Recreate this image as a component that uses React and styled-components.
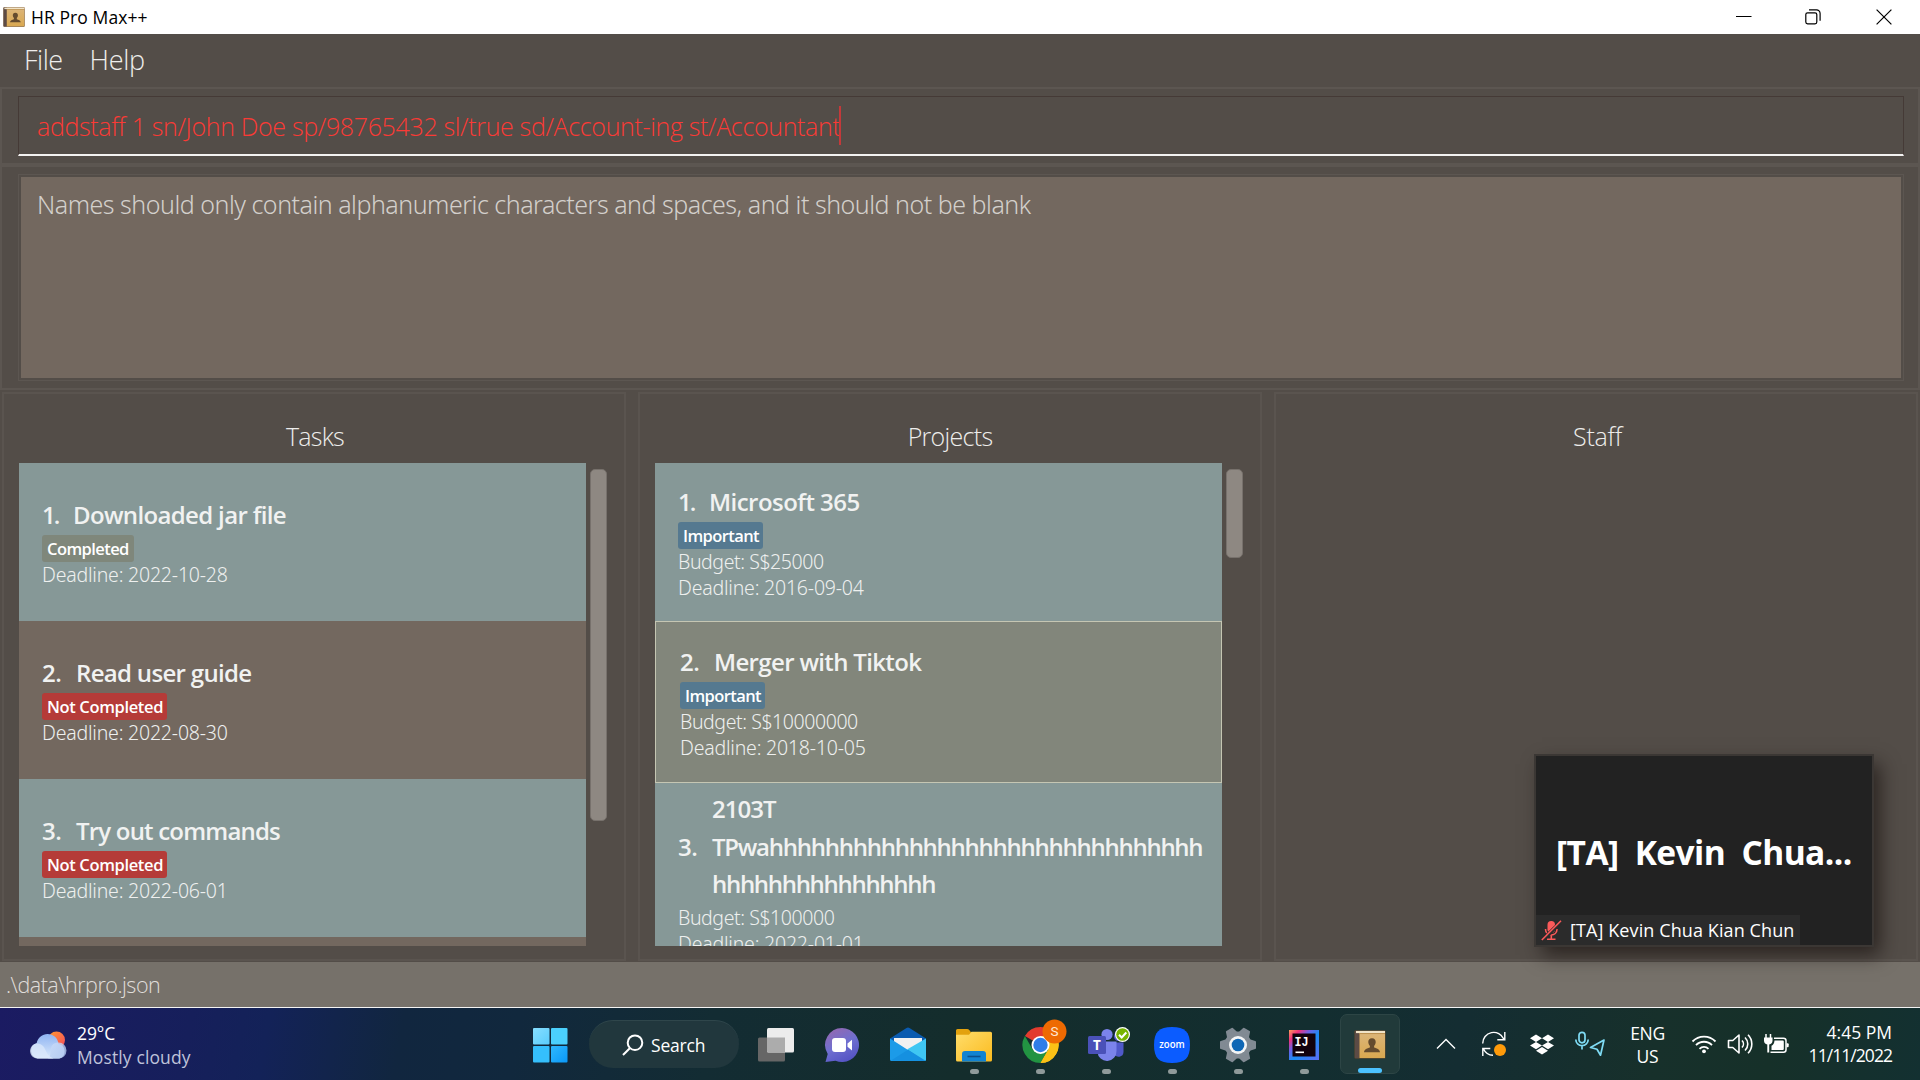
import React from "react";
import styled, { createGlobalStyle } from "styled-components";

const colors = {
  base: "#534d48",
  edge: "#5c5651",
  brown: "#73685f",
  teal: "#869897",
  olive: "#82867b",
  red: "#b53b38",
  blue: "#557990",
  thumb: "#8e8882",
};

const GlobalStyle = createGlobalStyle`
  * { box-sizing: border-box; }
  body {
    margin: 0;
    overflow: hidden;
    font-family: "Open Sans", "Noto Sans", sans-serif;
  }
`;

const Text = styled.span`
  display: block;
  flex: none;
  white-space: pre;
  font-size: ${(p) => p.$size}px;
  font-weight: ${(p) => p.$weight || 400};
  letter-spacing: ${(p) => p.$track || 0}px;
  line-height: ${(p) => p.$line || 24}px;
  color: ${(p) => p.$color || "#fff"};
`;

const BodyText = styled(Text)`
  font-family: "Noto Sans", "Open Sans", sans-serif;
`;

const Screen = styled.div`
  width: 1920px;
  height: 1080px;
  display: flex;
  flex-direction: column;
  background: ${colors.base};
`;

/* ---------- window chrome ---------- */

const TitleBar = styled.header`
  height: 34px;
  flex: none;
  display: flex;
  align-items: center;
  padding-left: 3px;
  background: #fff;
`;

const AppTitle = styled.div`
  flex: 1;
  display: flex;
  align-items: center;
  gap: 6px;
`;

const WindowButton = styled.div`
  width: ${(p) => p.$width || 69}px;
  height: 34px;
  display: flex;
  align-items: center;
  justify-content: center;
`;

const MenuBar = styled.nav`
  height: 53px;
  flex: none;
  display: flex;
  align-items: center;
  gap: 27px;
  padding: 0 0 2px 24px;
`;

const CommandPane = styled.section`
  height: 78px;
  flex: none;
  padding: 7px 14px 0 16px;
  border: 2px solid ${colors.edge};
`;

const CommandField = styled.div`
  height: 60px;
  display: flex;
  align-items: center;
  padding-left: 18px;
  border: 1px solid #453a36;
  border-bottom: 2px solid #f3f2f1;
`;

const Caret = styled.div`
  width: 2px;
  height: 39px;
  margin-left: -1px;
  background: #c4393a;
`;

const ResultPane = styled.section`
  height: 225px;
  flex: none;
  padding: 7px 14px 7px 16px;
  border: 2px solid ${colors.edge};
`;

const ResultFrame = styled.div`
  height: 207px;
  padding: 2px;
  border: 1px solid ${colors.edge};
`;

const ResultBox = styled.div`
  height: 201px;
  padding: 10px 0 0 16px;
  background: ${colors.brown};
`;

/* ---------- list panels ---------- */

const Panels = styled.main`
  height: 572px;
  flex: none;
  display: grid;
  grid-template-columns: 624px 624px 644px;
  column-gap: 12px;
  padding: 2px 2px 1px;
`;

const Panel = styled.section`
  display: flex;
  flex-direction: column;
  border: 2px solid #5a544f;
`;

const PanelTitle = styled.h2`
  height: 69px;
  flex: none;
  margin: 0;
  padding: 15px 0 0 ${(p) => p.$inset || 0}px;
  display: flex;
  align-items: center;
  justify-content: center;
`;

const ListArea = styled.div`
  display: flex;
  gap: 4px;
  padding-left: 15px;
`;

const List = styled.div`
  width: 567px;
  height: 483px;
  overflow: hidden;
  display: flex;
  flex-direction: column;
`;

const ScrollThumb = styled.div`
  width: 17px;
  height: ${(p) => p.$height}px;
  margin-top: 6px;
  border-radius: 5px;
  border: 1px solid #77716c;
  background: ${colors.thumb};
`;

const Card = styled.article`
  flex: none;
  height: ${(p) => p.$height || 158}px;
  padding-left: 23px;
  display: flex;
  flex-direction: column;
  justify-content: ${(p) => (p.$top ? "flex-start" : "center")};
  padding-top: ${(p) => (p.$top ? 7 : 0)}px;
  background: ${(p) => p.$bg};
  border: ${(p) => (p.$selected ? "1px solid #c5c6b3" : "0")};
  ${(p) => p.$selected && "padding-left: 24px;"}
`;

const Heading = styled.div`
  display: flex;
  align-items: center;
`;

const Index = styled.div`
  width: ${(p) => p.$width}px;
  flex: none;
`;

const Name = styled.div`
  display: flex;
  flex-direction: column;
`;

const Tags = styled.div`
  display: flex;
  padding-top: 2px;
`;

const Tag = styled.span`
  height: 27px;
  width: ${(p) => p.$width}px;
  padding-left: 5px;
  display: flex;
  align-items: center;
  border-radius: 3px;
  background: ${(p) => p.$bg};
`;

const StatusBar = styled.footer`
  height: 46px;
  flex: none;
  display: flex;
  align-items: center;
  padding-left: 6px;
  background: #76716a;
  border-bottom: 1px solid #f4f4f4;
`;

/* ---------- meeting thumbnail ---------- */

const Meeting = styled.aside`
  position: absolute;
  left: 1536px;
  top: 756px;
  width: 336px;
  height: 189px;
  display: flex;
  flex-direction: column;
  background: #222;
  box-shadow: 0 0 0 2px #3b3734, 7px 9px 18px 1px rgba(25, 18, 15, 0.7);
`;

const MeetingName = styled.div`
  height: 159px;
  padding: 32px 0 0 20px;
  display: flex;
  align-items: center;
  word-spacing: 8px;
`;

const MeetingTag = styled.div`
  width: 264px;
  height: 30px;
  padding-left: 5px;
  display: flex;
  align-items: center;
  gap: 8px;
  background: #2b2b2b;
`;

/* ---------- taskbar ---------- */

const Taskbar = styled.div`
  height: 72px;
  flex: none;
  display: flex;
  align-items: center;
  background: linear-gradient(100deg, #1b1b62 0%, #161f5b 10%, #132258 14%, #11263f 21%, #11283d 27%, #132c33 37%, #142d2c 50%, #132e30 68%, #142d32 76%, #17302b 86%, #163029 92%, #133031 100%);
`;

const Weather = styled.div`
  width: 517px;
  flex: none;
  padding: 2px 0 0 29px;
  display: flex;
  align-items: center;
  gap: 10px;
`;

const Lines = styled.div`
  display: flex;
  flex-direction: column;
  align-items: ${(p) => p.$align || "flex-start"};
`;

const AppButton = styled.div`
  width: 66px;
  height: 72px;
  flex: none;
  display: flex;
  flex-direction: column;
  align-items: center;
  padding-top: 19px;
`;

const AppIcon = styled.div`
  height: 42px;
  display: flex;
  align-items: flex-start;
`;

const Indicator = styled.div`
  width: ${(p) => (p.$active ? 24 : 9)}px;
  height: 5px;
  border-radius: 3px;
  background: ${(p) => (p.$active ? "#4cc2ff" : "#8f9a9a")};
`;

const ActiveTile = styled.div`
  width: 60px;
  height: 60px;
  margin: 0 22px 0 3px;
  flex: none;
  padding-top: 15px;
  display: flex;
  flex-direction: column;
  align-items: center;
  justify-content: space-between;
  border: 1px solid #2d4545;
  border-radius: 7px;
  background: #213a3a;
`;

const SearchPill = styled.div`
  width: 150px;
  height: 48px;
  flex: none;
  margin: 0 4px 0 6px;
  padding-left: 33px;
  display: flex;
  align-items: center;
  gap: 7px;
  border-radius: 24px;
  border-top: 1px solid #2f464b;
  background: #21373d;
`;

const TrayItem = styled.div`
  width: ${(p) => p.$width}px;
  flex: none;
  display: flex;
  align-items: center;
  justify-content: center;
`;

const Language = styled(TrayItem)`
  margin-right: 5px;
  padding-top: 1px;
`;

const Clock = styled.div`
  width: 98px;
  flex: none;
  display: flex;
  justify-content: flex-end;
`;

/* ---------- icons ---------- */

const AddressBook = ({ w, h }) => (
  <svg width={w} height={h} viewBox="0 0 32 30" preserveAspectRatio="none">
    <defs>
      <linearGradient id="cover" x1="0" y1="0" x2="0" y2="1">
        <stop offset="0" stopColor="#dcb67c" />
        <stop offset="1" stopColor="#d9a850" />
      </linearGradient>
    </defs>
    <rect x="0.5" y="0.5" width="31" height="29" rx="1" fill="#6b4a2a" />
    <rect x="1" y="1" width="4.5" height="28" fill="#5c4b45" />
    <rect x="5.5" y="1" width="25.5" height="28" fill="url(#cover)" />
    <rect x="2" y="1" width="29" height="2.2" fill="#f1e3c6" />
    <rect x="5.5" y="3.2" width="25.5" height="1" fill="#b98d4c" />
    <path d="M18 8.5c2.6 0 3.9 1.8 3.7 4.2-.2 2-.9 3-1.6 3.8v1.7c2.6.9 5.400 1.600 5.900 4.800H10c.5-3.200 3.300-3.900 5.900-4.800v-1.700c-.7-.8-1.400-1.800-1.600-3.800-.2-2.400 1.100-4.200 3.700-4.200z" fill="#644b2e" />
  </svg>
);

const CloudIcon = () => (
  <svg width="38" height="30" viewBox="0 0 38 30">
    <defs>
      <linearGradient id="sun" x1="0" y1="0" x2="1" y2="1">
        <stop offset="0" stopColor="#ff9a2e" />
        <stop offset="1" stopColor="#f4495e" />
      </linearGradient>
      <linearGradient id="cloud" x1="0" y1="0" x2="0" y2="1">
        <stop offset="0" stopColor="#8fb4f2" />
        <stop offset="1" stopColor="#dbe9fb" />
      </linearGradient>
      <linearGradient id="cloudFront" x1="0" y1="0" x2="1" y2="1">
        <stop offset="0" stopColor="#cfdff9" />
        <stop offset="1" stopColor="#a9c2ee" />
      </linearGradient>
    </defs>
    <circle cx="27.500" cy="10" r="8.500" fill="url(#sun)" />
    <path d="M8.500 28.500a8 8 0 0 1-.8-15.500C9 7.500 13.300 4 18.500 4c6 0 10.500 4.300 11 10a7.500 7.500 0 0 1 1 14.500z" fill="url(#cloud)" />
    <path d="M29.500 12.500a8 8 0 0 1 0 16H19c4-2 1-8 4-13 1.600-2.200 4-3 6.500-3z" fill="url(#cloudFront)" opacity=".8" />
    <path d="M8.500 28.500a7.500 7.500 0 1 1 6-12c3 4 3 9 10 12z" fill="#dce8fb" opacity=".75" />
  </svg>
);

const WindowsLogo = () => (
  <svg width="36" height="36" viewBox="0 0 36 36">
    <defs>
      <linearGradient id="win" x1="0" y1="0" x2="1" y2="1">
        <stop offset="0" stopColor="#86deff" />
        <stop offset="1" stopColor="#5accfb" />
      </linearGradient>
      <linearGradient id="win2" x1="0" y1="0" x2="1" y2="1">
        <stop offset="0" stopColor="#2fb8fd" />
        <stop offset="1" stopColor="#0a98f8" />
      </linearGradient>
    </defs>
    <rect x="1" y="1" width="16.500" height="16.500" rx="1" fill="url(#win)" />
    <rect x="19" y="1" width="16.500" height="16.500" rx="1" fill="#4bd0fd" />
    <rect x="1" y="19" width="16.500" height="16.500" rx="1" fill="#35bffc" />
    <rect x="19" y="19" width="16.500" height="16.500" rx="1" fill="url(#win2)" />
  </svg>
);

const SearchIcon = () => (
  <svg width="22" height="22" viewBox="0 0 22 22" fill="none" stroke="#fff" strokeWidth="2">
    <circle cx="13" cy="8.700" r="7.300" />
    <path d="M7.800 14.200 1 21" />
  </svg>
);

const TaskViewIcon = () => (
  <svg width="36" height="36" viewBox="0 0 36 36">
    <rect x="0" y="10.500" width="27" height="24" rx="1.500" fill="#666" />
    <rect x="9" y="1" width="27" height="24.500" rx="1.500" fill="#ececec" />
    <path d="M9 10.500h18v15H10.500A1.500 1.500 0 0 1 9 24z" fill="#acacac" />
  </svg>
);

const ChatIcon = () => (
  <svg width="36" height="36" viewBox="0 0 36 36">
    <defs>
      <linearGradient id="chat" x1="0.200" y1="0" x2="0.700" y2="1">
        <stop offset="0" stopColor="#9468b0" />
        <stop offset="0.500" stopColor="#6f6fd0" />
        <stop offset="1" stopColor="#5352c4" />
      </linearGradient>
    </defs>
    <path d="M18 1a17 17 0 1 1-6.500 32.700L1.500 35l2.200-8A17 17 0 0 1 18 1z" fill="url(#chat)" />
    <rect x="8" y="11" width="14" height="14" rx="3" fill="#fff" />
    <path d="M23.500 16.500 28 12.800v10.600l-4.500-3.700z" fill="#fff" />
  </svg>
);

const MailIcon = () => (
  <svg width="36" height="36" viewBox="0 0 36 36">
    <path d="M0 11.500 16.500.9q1.500-.8 3 0L36 11.500V20H0z" fill="#0a5bb0" />
    <path d="M4 11h28v12H4z" fill="#f1f1f1" />
    <path d="M0 11.500 18 23l18 11H1.500A1.500 1.500 0 0 1 0 32.500z" fill="#1c9be8" />
    <path d="M36 11.500 17 22.600 34.500 34a1.500 1.500 0 0 0 1.500-1.500z" fill="#3fc7f3" />
    <path d="M1 33.500 18 22.800 36 34z" fill="#1590e0" />
  </svg>
);

const ExplorerIcon = () => (
  <svg width="36" height="36" viewBox="0 0 36 36">
    <defs>
      <linearGradient id="folder" x1="0" y1="0" x2="1" y2="1">
        <stop offset="0" stopColor="#ffdd6b" />
        <stop offset="1" stopColor="#fbbb1f" />
      </linearGradient>
    </defs>
    <path d="M0 3.500A1.500 1.500 0 0 1 1.500 2H11q1.500 0 2.500 1.200L15.500 6H27v7H0z" fill="#e3a20e" />
    <path d="M0 7.800h13l2.500-3h19A1.500 1.500 0 0 1 36 6.300V33a1.500 1.500 0 0 1-1.500 1.500h-33A1.500 1.500 0 0 1 0 33z" fill="url(#folder)" />
    <path d="M6 34.500V27a3 3 0 0 1 3-3h18a3 3 0 0 1 3 3v7.500z" fill="#1183d2" />
    <path d="M11.500 29.500h13" stroke="#0b4f8c" strokeWidth="1.600" />
  </svg>
);

const ChromeSvg = styled.svg`
  margin: -8px 0 0 9px;
`;

const ChromeIcon = () => (
  <ChromeSvg width="46" height="44" viewBox="0 0 46 44">
    <path d="M18.500 26 2.900 17A18 18 0 0 1 34.100 17H18.500z" fill="#e33b2e" />
    <path d="M18.500 26 34.100 17A18 18 0 0 1 18.500 44L26.300 30.500z" fill="#fbc116" />
    <path d="M18.500 26 10.700 30.500 2.900 17A18 18 0 0 0 18.500 44l7.800-13.500z" fill="#229342" />
    <path d="M18.500 17h15.600A18 18 0 0 1 18.500 44l7.800-13.500z" fill="#fbc116" />
    <circle cx="18.500" cy="26" r="9" fill="#fff" />
    <circle cx="18.500" cy="26" r="7.200" fill="#2f7de9" />
    <circle cx="32.500" cy="12.500" r="12" fill="#ee6a02" />
    <text x="32.500" y="17.300" fontSize="13.500" textAnchor="middle" fill="#ffe9d6" fontFamily="Roboto, sans-serif">S</text>
  </ChromeSvg>
);

const TeamsIcon = () => (
  <svg width="44" height="36" viewBox="0 0 44 36">
    <circle cx="30.500" cy="9.500" r="4.500" fill="#5059c9" />
    <path d="M26 15.500h9.500v9.500a5 5 0 0 1-9.500 2z" fill="#5059c9" />
    <circle cx="19" cy="7.500" r="5.600" fill="#7b83eb" />
    <path d="M9.500 14.500h19V24a9.500 9.500 0 0 1-19 1z" fill="#7b83eb" />
    <rect x="0" y="9" width="18" height="18" rx="1.500" fill="#4a51b8" />
    <text x="9" y="22.800" fontSize="13.500" fontWeight="700" textAnchor="middle" fill="#fff" fontFamily="Open Sans, sans-serif">T</text>
    <circle cx="34.500" cy="7.500" r="7.500" fill="#fff" />
    <circle cx="34.500" cy="7.500" r="6.300" fill="#77b300" />
    <path d="m31 7.800 2.700 2.700 4.600-5" fill="none" stroke="#fff" strokeWidth="2" />
  </svg>
);

const TeamsInset = styled.div`
  padding-left: 7px;
`;

const ZoomIcon = () => (
  <svg width="36" height="36" viewBox="0 0 36 36">
    <path d="M18 0C31 0 36 5 36 18S31 36 18 36 0 31 0 18 5 0 18 0z" fill="#0b5cff" />
    <text x="18" y="21.300" fontSize="11.500" fontWeight="600" textLength="25.500" lengthAdjust="spacingAndGlyphs" textAnchor="middle" fill="#fff" fontFamily="Open Sans, sans-serif">zoom</text>
  </svg>
);

const GearIcon = () => (
  <svg width="36" height="36" viewBox="0 0 36 36">
    <g fill="#818a93">
      {[0, 60, 120].map((a) => (
        <path key={a} d="M0 15q0-.8.800-1L7 12V24L.8 22Q0 21.800 0 21zM36 15q0-.8-.8-1L29 12V24l6.200-2q.8-.2.800-1z" transform={`rotate(${a} 18 18)`} />
      ))}
      <circle cx="18" cy="18" r="13.500" />
    </g>
    <circle cx="18" cy="18" r="9" fill="#f3f5f6" />
    <circle cx="18" cy="18" r="6.300" fill="#0f67b5" />
  </svg>
);

const IntelliJIcon = () => (
  <svg width="30" height="30" viewBox="0 0 30 30">
    <defs>
      <linearGradient id="ij" x1="0" y1="0" x2="1" y2="1">
        <stop offset="0" stopColor="#fca05a" />
        <stop offset="0.180" stopColor="#f2307b" />
        <stop offset="0.360" stopColor="#6a62e8" />
        <stop offset="0.550" stopColor="#1b8cf4" />
        <stop offset="1" stopColor="#5c6cf5" />
      </linearGradient>
    </defs>
    <rect width="30" height="30" fill="url(#ij)" />
    <rect x="3.500" y="3.500" width="23" height="23" fill="#12020d" />
    <text x="5.500" y="15.800" fontSize="12.500" fontWeight="700" fill="#fff" fontFamily="Liberation Mono, monospace" textLength="14" lengthAdjust="spacingAndGlyphs">IJ</text>
    <rect x="6.500" y="21.500" width="8.500" height="1.600" fill="#fff" />
  </svg>
);

const ChevronUp = () => (
  <svg width="20" height="12" viewBox="0 0 20 12" fill="none" stroke="#fff" strokeWidth="1.400">
    <path d="m1 10.500 9-9 9 9" />
  </svg>
);

const SyncIcon = () => (
  <svg width="26" height="26" viewBox="0 0 26 26" fill="none" stroke="#fff" strokeWidth="1.400">
    <path d="M1.700 12.500A11 11 0 0 1 22.800 8M23.800 1v7.800h-7.500M12 24.300A11 11 0 0 1 2.500 18M1.800 25v-7.500h7.500" />
    <circle cx="19" cy="19" r="6" fill="#ff9b0a" stroke="none" />
  </svg>
);

const DropboxIcon = () => (
  <svg width="24" height="21" viewBox="0 0 24 21" fill="#fff">
    <path d="m6 .5 6 3.700-6 3.700L0 4.200zM18 .5l6 3.700-6 3.700-6-3.700zM6 7.900l6 3.700-6 3.700-6-3.700zM18 7.900l6 3.700-6 3.700-6-3.700zM12 13l6 3.700-6 3.700-6-3.700z" />
  </svg>
);

const MicLocationIcon = () => (
  <svg width="32" height="26" viewBox="0 0 32 26" fill="none" stroke="#7fdcf5" strokeWidth="1.700">
    <rect x="5" y="1.300" width="6" height="10.500" rx="3" />
    <path d="M1.800 8.500a6.200 6.200 0 0 0 12.400 0M8 14.800V18.500" />
    <path d="m30 9-13.500 7.500 6.500 1.700 3.500 6z" strokeLinejoin="round" />
  </svg>
);

const WifiIcon = () => (
  <svg width="26" height="20" viewBox="0 0 26 20" fill="none" stroke="#fff" strokeWidth="1.800">
    <path d="M1.500 7.500a16 16 0 0 1 23 0M5 11.200a11 11 0 0 1 16 0M8.500 14.800a6.300 6.300 0 0 1 9 0" />
    <circle cx="13" cy="17.300" r="1.900" fill="#fff" stroke="none" />
  </svg>
);

const SpeakerIcon = () => (
  <svg width="26" height="22" viewBox="0 0 26 22" fill="none" stroke="#fff" strokeWidth="1.600">
    <path d="M1.500 7.500h4.300L12 2v18l-6.200-5.500H1.500z" strokeLinejoin="round" />
    <path d="M15 7.500a5 5 0 0 1 0 7M18 4.500a9 9 0 0 1 0 13M21 1.800a13 13 0 0 1 0 18.400" />
  </svg>
);

const BatteryIcon = () => (
  <svg width="26" height="22" viewBox="0 0 26 22">
    <path d="M3 1v4M7.500 1v4" stroke="#fff" strokeWidth="1.500" />
    <path d="M1 4.500h8.500v3.300a4 4 0 0 1-3.300 3.700V19.500h-1.900v-8A4 4 0 0 1 1 7.800z" fill="#fff" />
    <path d="M11 5.300h9.500a2.500 2.500 0 0 1 2.500 2.500v9a2.500 2.500 0 0 1-2.500 2.500H7.500" fill="none" stroke="#fff" strokeWidth="1.500" />
    <path d="M11.500 7.500h8.300q1 0 1 1v7.600q0 1-1 1H8.500v-4.300q2.800-1.300 3-5.300z" fill="#fff" />
    <path d="M23.500 10.300h1.200q1 0 1 1v2q0 1-1 1h-1.200z" fill="#fff" />
  </svg>
);

const MutedMic = () => (
  <svg width="21" height="21" viewBox="0 0 21 21">
    <rect x="6.500" y="1" width="7.500" height="12" rx="3.700" fill="#fb5a5a" />
    <path d="M4.500 9c0 8 11.500 8 11.500 0M10.300 15v4M6 19.300h8.500" stroke="#fb5a5a" strokeWidth="1.600" fill="none" />
    <path d="M1 20.500 20.500 1.500" stroke="#2b2b2b" strokeWidth="4" />
    <path d="M.8 20 20 .8" stroke="#fb5a5a" strokeWidth="1.600" />
  </svg>
);

const Minimise = () => (
  <svg width="16" height="16"><path d="M0 7.500h15.500" stroke="#000" strokeWidth="1" /></svg>
);
const Restore = () => (
  <svg width="16" height="16" viewBox="0 0 16 16" fill="none" stroke="#000" strokeWidth="1.200">
    <rect x="0.800" y="3.800" width="11" height="11" rx="1.800" />
    <path d="M4 .8h7.500a3.600 3.600 0 0 1 3.600 3.600v7.300" />
  </svg>
);
const Close = () => (
  <svg width="16" height="16" stroke="#000" strokeWidth="1.200"><path d="m.6.600 14.800 14.800M15.400.6.600 15.400" /></svg>
);

/* ---------- data ---------- */

const tagLook = {
  Completed: { bg: "#7f877b", width: 92, track: -0.57 },
  "Not Completed": { bg: colors.red, width: 125, track: -0.36 },
  Important: { bg: colors.blue, width: 85, track: -0.6 },
};

const tasks = [
  { n: "1.", gap: 31, numTrack: -2, name: ["Downloaded jar file"], track: [-0.65], tag: "Completed", lines: ["Deadline: 2022-10-28"], bg: colors.teal },
  { n: "2.", gap: 34, numTrack: -0.4, name: ["Read user guide"], track: [-0.68], tag: "Not Completed", lines: ["Deadline: 2022-08-30"], bg: colors.brown },
  { n: "3.", gap: 34, numTrack: -0.4, name: ["Try out commands"], track: [-0.8], tag: "Not Completed", lines: ["Deadline: 2022-06-01"], bg: colors.teal },
];

const projects = [
  { n: "1.", gap: 31, numTrack: -2, name: ["Microsoft 365"], track: [-0.54], tag: "Important", lines: ["Budget: S$25000", "Deadline: 2016-09-04"], bg: colors.teal },
  { n: "2.", gap: 34, numTrack: -0.4, name: ["Merger with Tiktok"], track: [-0.66], tag: "Important", lines: ["Budget: S$10000000", "Deadline: 2018-10-05"], bg: colors.olive, selected: true, height: 162 },
  { n: "3.", gap: 34, numTrack: -0.4, name: ["2103T", "TPwahhhhhhhhhhhhhhhhhhhhhhhhhhhhhhh", "hhhhhhhhhhhhhhhh"], track: [-1, -1.26, -1.3], lines: ["Budget: S$100000", "Deadline: 2022-01-01"], bg: colors.teal, top: true, height: 180 },
];

const soft = "#f1f2f1";

const Entry = ({ item }) => (
  <Card $bg={item.bg} $selected={item.selected} $height={item.height} $top={item.top}>
    <Heading>
      <Index $width={item.gap}>
        <Text $size={24} $weight={600} $line={37.5} $track={item.numTrack} $color={soft}>{item.n}</Text>
      </Index>
      <Name>
        {item.name.map((line, i) => (
          <Text key={line} $size={24} $weight={600} $line={37.5} $track={item.track[i]} $color={soft}>{line}</Text>
        ))}
      </Name>
    </Heading>
    <Tags>
      {item.tag && (
        <Tag $bg={tagLook[item.tag].bg} $width={tagLook[item.tag].width}>
          <Text $size={16.5} $weight={600} $track={tagLook[item.tag].track}>{item.tag}</Text>
        </Tag>
      )}
    </Tags>
    {item.lines.map((line) => (
      <BodyText key={line} $size={19.5} $weight={300} $line={26} $track={line[0] === "B" ? -0.42 : -0.2} $color="#eef0ef">{line}</BodyText>
    ))}
  </Card>
);

const ListPanel = ({ title, track, inset, items, thumb, children }) => (
  <Panel>
    <PanelTitle $inset={inset}>
      <Text $size={25} $weight={300} $line={34} $track={track} $color="#eeedec">{title}</Text>
    </PanelTitle>
    {items && (
      <ListArea>
        <List>
          {items.map((item) => <Entry key={item.n} item={item} />)}
          {children}
        </List>
        <ScrollThumb $height={thumb} />
      </ListArea>
    )}
  </Panel>
);

const TaskApp = ({ icon, running }) => (
  <AppButton>
    <AppIcon>{icon}</AppIcon>
    {running && <Indicator />}
  </AppButton>
);

const IconInset = styled.div`
  padding-top: 3px;
`;

export default function App() {
  return (
    <>
      <GlobalStyle />
      <Screen>
        <TitleBar>
          <AppTitle>
            <AddressBook w={22} h={20} />
            <Text $size={17.5} $track={0.08} $color="#000">HR Pro Max++</Text>
          </AppTitle>
          <WindowButton><Minimise /></WindowButton>
          <WindowButton><Restore /></WindowButton>
          <WindowButton $width={73}><Close /></WindowButton>
        </TitleBar>
        <MenuBar>
          <Text $size={27} $weight={300} $line={36} $track={-0.5} $color="#eeedec">File</Text>
          <Text $size={27} $weight={300} $line={36} $track={-0.35} $color="#eeedec">Help</Text>
        </MenuBar>
        <CommandPane>
          <CommandField>
            <Text $size={25} $weight={300} $line={34} $track={-0.345} $color="#fb3a35">addstaff 1 sn/John Doe sp/98765432 sl/true sd/Account-ing st/Accountant</Text>
            <Caret />
          </CommandField>
        </CommandPane>
        <ResultPane>
          <ResultFrame>
            <ResultBox>
              <BodyText $size={25} $weight={300} $line={34} $track={-0.49} $color="#d3d0cc">Names should only contain alphanumeric characters and spaces, and it should not be blank</BodyText>
            </ResultBox>
          </ResultFrame>
        </ResultPane>
        <Panels>
          <ListPanel title="Tasks" track={-0.76} inset={2} items={tasks} thumb={352}>
            <Card $height={158} $bg={colors.brown} />
          </ListPanel>
          <ListPanel title="Projects" track={-0.7} items={projects} thumb={89} />
          <ListPanel title="Staff" track={-0.26} inset={3} />
        </Panels>
        <StatusBar>
          <Text $size={21.5} $weight={300} $line={30} $track={-0.5} $color="#e0dedb">{".\\data\\hrpro.json"}</Text>
        </StatusBar>
        <Taskbar>
          <Weather>
            <CloudIcon />
            <Lines>
              <Text $size={17.5} $track={-0.1}>29°C</Text>
              <Text $size={17.5} $track={0.12} $color="#bfc3da">Mostly cloudy</Text>
            </Lines>
          </Weather>
          <AppButton><WindowsLogo /></AppButton>
          <SearchPill>
            <SearchIcon />
            <Text $size={17.5} $track={-0.2} $line={26}>Search</Text>
          </SearchPill>
          <TaskApp icon={<TaskViewIcon />} />
          <TaskApp icon={<ChatIcon />} />
          <TaskApp icon={<MailIcon />} />
          <TaskApp icon={<ExplorerIcon />} running />
          <TaskApp icon={<ChromeIcon />} running />
          <TaskApp icon={<TeamsInset><TeamsIcon /></TeamsInset>} running />
          <TaskApp icon={<ZoomIcon />} running />
          <TaskApp icon={<GearIcon />} running />
          <TaskApp icon={<IconInset><IntelliJIcon /></IconInset>} running />
          <ActiveTile>
            <AddressBook w={32} h={29} />
            <Indicator $active />
          </ActiveTile>
          <TrayItem $width={48}><ChevronUp /></TrayItem>
          <TrayItem $width={48}><SyncIcon /></TrayItem>
          <TrayItem $width={48}><DropboxIcon /></TrayItem>
          <TrayItem $width={48}><MicLocationIcon /></TrayItem>
          <Language $width={67}>
            <Lines $align="center">
              <Text $size={17.5} $line={23} $track={-0.4}>ENG</Text>
              <Text $size={17.5} $line={23} $track={-0.2}>US</Text>
            </Lines>
          </Language>
          <TrayItem $width={36}><WifiIcon /></TrayItem>
          <TrayItem $width={36}><SpeakerIcon /></TrayItem>
          <TrayItem $width={36}><BatteryIcon /></TrayItem>
          <Clock>
            <Lines $align="flex-end">
              <Text $size={17.5} $line={23}>4:45 PM</Text>
              <Text $size={17.5} $line={23} $track={-0.95}>11/11/2022</Text>
            </Lines>
          </Clock>
        </Taskbar>
        <Meeting>
          <MeetingName>
            <Text $size={33.5} $weight={700} $line={44} $track={-0.55}>[TA] Kevin Chua...</Text>
          </MeetingName>
          <MeetingTag>
            <MutedMic />
            <Text $size={18} $track={0.1}>[TA] Kevin Chua Kian Chun</Text>
          </MeetingTag>
        </Meeting>
      </Screen>
    </>
  );
}
